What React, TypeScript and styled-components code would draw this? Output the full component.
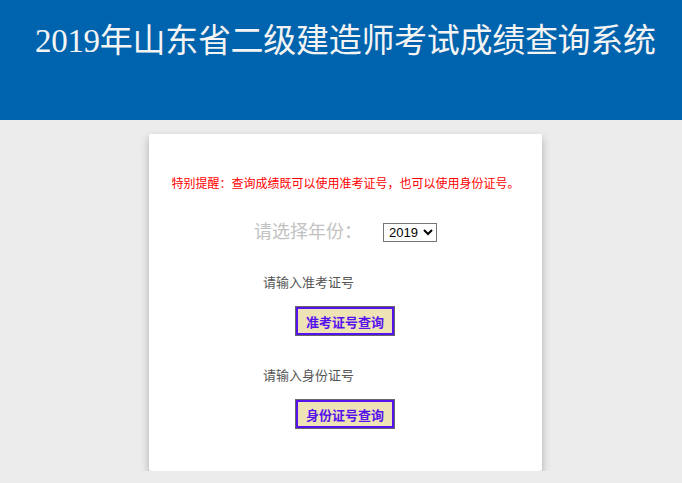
import { createGlobalStyle, styled } from 'styled-components';

const GlobalStyle = createGlobalStyle`
  html, body {
    margin: 0;
    padding: 0;
    background: #ececec;
  }
  body {
    font-family: "Liberation Sans", "Noto Sans CJK SC", sans-serif;
  }
`;

export default function App() {
  return (
    <>
      <GlobalStyle />
      <S.Header>
        <S.Title>2019年山东省二级建造师考试成绩查询系统</S.Title>
      </S.Header>
      <S.Card>
        <S.Notice>特别提醒：查询成绩既可以使用准考证号，也可以使用身份证号。</S.Notice>
        <S.YearRow>
          <S.YearLabel>请选择年份：</S.YearLabel>
          <S.YearSelect defaultValue="2019">
            <option value="2019">2019</option>
          </S.YearSelect>
        </S.YearRow>
        <S.Group $top="30px">
          <S.FieldLabel>请输入准考证号</S.FieldLabel>
          <S.QueryButton>准考证号查询</S.QueryButton>
        </S.Group>
        <S.Group $top="31px">
          <S.FieldLabel>请输入身份证号</S.FieldLabel>
          <S.QueryButton>身份证号查询</S.QueryButton>
        </S.Group>
      </S.Card>
    </>
  );
}

const S = {
  Header: styled.header`
    height: 120px;
    background: #0063ad;
    box-sizing: border-box;
    padding: 19px 0 0 35px;
  `,
  Title: styled.h1`
    margin: 0;
    font-family: "Liberation Serif", "Noto Sans CJK SC", serif;
    font-weight: normal;
    font-size: 33px;
    line-height: 44px;
    letter-spacing: -0.3px;
    color: #f4f4f4;
    white-space: nowrap;
  `,
  Card: styled.main`
    width: 393px;
    height: 337px;
    margin: 14px 0 0 149px;
    background: #fff;
    border-radius: 2px;
    box-shadow: 0 4px 8px rgba(0, 0, 0, 0.28);
    box-sizing: border-box;
    padding-top: 42px;
    display: flex;
    flex-direction: column;
    align-items: center;
  `,
  Notice: styled.p`
    margin: 0;
    font-size: 12px;
    line-height: 16px;
    color: #ff0000;
    white-space: nowrap;
  `,
  YearRow: styled.div`
    display: flex;
    align-items: center;
    margin-top: 28px;
  `,
  YearLabel: styled.span`
    font-size: 18px;
    line-height: 24px;
    color: #c2c2c2;
    width: 129px;
  `,
  YearSelect: styled.select`
    width: 54px;
    height: 19px;
    padding: 0 0 0 1px;
    font-family: "Liberation Sans", Arial, sans-serif;
    font-size: 13px;
    color: #000;
    background: #fff;
    border: 1px solid #767676;
    border-radius: 0;
    margin-top: 1px;
  `,
  Group: styled.section<{ $top: string }>`
    display: flex;
    flex-direction: column;
    align-items: flex-start;
    width: 100%;
    padding-left: 114px;
    box-sizing: border-box;
    margin-top: ${p => p.$top};
  `,
  FieldLabel: styled.div`
    font-size: 13px;
    line-height: 18px;
    color: #555;
  `,
  QueryButton: styled.button`
    margin: 14px 0 0 32px;
    width: 100px;
    height: 30px;
    padding: 0;
    box-sizing: border-box;
    background: #efe2b4;
    border: 3px solid #5512ee;
    outline: 1px solid #666;
    outline-offset: -1px;
    color: #5512ee;
    font-family: "Liberation Sans", "Noto Sans CJK SC", sans-serif;
    font-weight: bold;
    font-size: 13px;
    cursor: pointer;
  `,
};
